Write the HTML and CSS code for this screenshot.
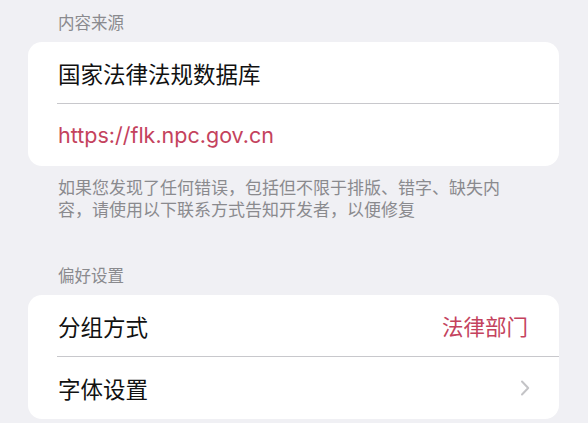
FILE: index.html
```html
<!DOCTYPE html>
<html lang="zh-CN">
<head>
<meta charset="utf-8">
<title>设置</title>
<link rel="stylesheet" href="styles.css">
</head>
<body>
<div class="page">
  <div class="section-header">内容来源</div>
  <div class="card">
    <div class="row">
      <div class="row-inner with-divider"><span class="label">国家法律法规数据库</span></div>
    </div>
    <div class="row">
      <div class="row-inner"><span class="link">https://flk.npc.gov.cn</span></div>
    </div>
  </div>
  <div class="section-footer">如果您发现了任何错误，包括但不限于排版、错字、缺失内容，请使用以下联系方式告知开发者，以便修复</div>

  <div class="section-header second">偏好设置</div>
  <div class="card">
    <div class="row">
      <div class="row-inner with-divider">
        <span class="label">分组方式</span>
        <span class="value">法律部门</span>
      </div>
    </div>
    <div class="row">
      <div class="row-inner">
        <span class="label">字体设置</span>
        <svg class="chevron" width="10" height="16" viewBox="0 0 10 16" aria-hidden="true">
          <path d="M2 1.5 L8.2 8 L2 14.5" fill="none" stroke="#c4c4c7" stroke-width="2" stroke-linecap="round" stroke-linejoin="round"/>
        </svg>
      </div>
    </div>
  </div>
</div>
</body>
</html>
```

FILE: styles.css
```css
html, body {
  margin: 0;
  padding: 0;
}

body {
  background: #f0f0f4;
  font-family: "Noto Sans CJK SC", "Noto Sans", sans-serif;
  color: #111;
}

.page {
  padding: 10px 29px 0 28px;
}

.section-header {
  padding-left: 30px;
  font-size: 16.5px;
  line-height: 24px;
  color: #8a8a8e;
  margin-bottom: 8px;
}

.section-header.second {
  margin-top: 43px;
}

.card {
  background: #ffffff;
  border-radius: 14px;
  overflow: hidden;
}

.row {
  padding-left: 29px;
}

.row-inner {
  height: 62px;
  box-sizing: border-box;
  padding-right: 30px;
  display: flex;
  align-items: center;
  justify-content: space-between;
}

.row-inner.with-divider {
  border-bottom: 1px solid #c8c8cc;
}

.label {
  font-size: 22.5px;
  color: #111;
  padding-left: 1px;
}

.link {
  font-family: "Inter", "Noto Sans CJK SC", sans-serif;
  font-size: 21.5px;
  color: #c4425d;
  padding-left: 1px;
}

.value {
  font-size: 21.5px;
  color: #c4425d;
  padding-right: 1px;
}

.chevron {
  display: block;
  margin-right: -1px;
}

.section-footer {
  margin-top: 10px;
  padding: 0 30px;
  font-size: 17px;
  line-height: 22px;
  color: #8a8a8e;
}
```
